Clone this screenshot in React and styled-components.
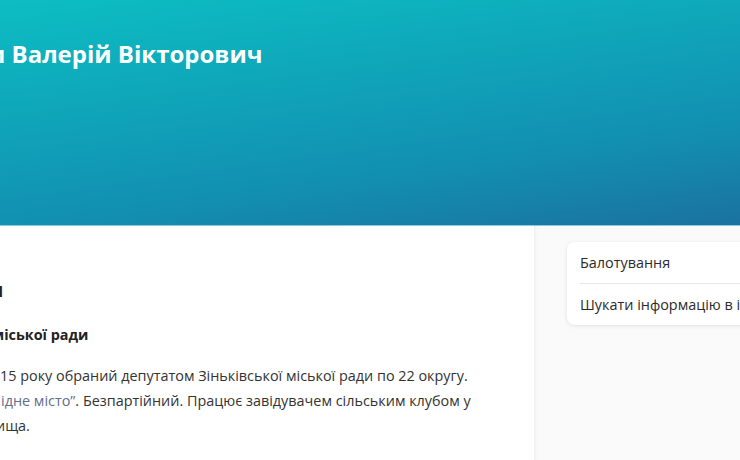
import React from "react";
import styled, { createGlobalStyle } from "styled-components";

const Global = createGlobalStyle`
  html, body { margin: 0; padding: 0; background: #ffffff; }
  body { font-family: "Open Sans", "Noto Sans", sans-serif; overflow: hidden; }
  #root { width: 740px; height: 460px; overflow: hidden; }
`;

const Page = styled.div`
  width: 740px;
  height: 460px;
  display: flex;
  flex-direction: column;
  overflow: hidden;
`;

const Hero = styled.header`
  height: 226px;
  flex: none;
  box-sizing: border-box;
  background: linear-gradient(172deg, #0cbec3 0%, #128fb1 70%, #1b72a0 100%);
  border-bottom: 1px solid #86cbe0;
  overflow: hidden;
  padding-top: 39px;
`;

const Title = styled.h1`
  margin: 0 0 0 ${(p) => p.$shift}px;
  font-size: 24px;
  line-height: 29px;
  font-weight: 700;
  color: #ffffff;
  white-space: nowrap;
`;

const Body = styled.div`
  flex: 1;
  display: flex;
  min-height: 0;
`;

const Main = styled.main`
  width: 534px;
  flex: none;
  overflow: hidden;
  padding-top: 52px;
  box-sizing: border-box;
  color: #333333;
`;

const Heading = styled.h2`
  margin: 0 0 22px ${(p) => p.$shift}px;
  font-size: 20px;
  line-height: 24px;
  font-weight: 700;
  color: #222222;
  white-space: nowrap;
`;

const SubHeading = styled.h3`
  margin: 0 0 18px ${(p) => p.$shift}px;
  font-size: 14.4px;
  line-height: 21px;
  font-weight: 700;
  color: #222222;
  white-space: nowrap;
`;

const Text = styled.p`
  margin: 0;
  font-size: 14.4px;
  line-height: 25px;
  color: #333333;
`;

const Line = styled.span`
  display: block;
  white-space: nowrap;
  margin-left: ${(p) => p.$shift}px;
`;

const Link = styled.a`
  color: #5f6d8e;
  text-decoration: none;
`;

const Aside = styled.aside`
  flex: 1;
  background: #fafafa;
  box-shadow: inset 3px 0 3px -2px rgba(0, 0, 0, 0.06);
  padding: 16px 0 0 33px;
  overflow: hidden;
`;

const Card = styled.nav`
  width: 260px;
  background: #ffffff;
  border-radius: 8px;
  box-shadow: 0 1px 4px rgba(0, 0, 0, 0.1);
  padding: 0 13px;
  display: flex;
  flex-direction: column;
`;

const CardItem = styled.a`
  display: block;
  padding: 10px 0;
  font-size: 14.4px;
  line-height: 21px;
  color: #2b2b2b;
  text-decoration: none;
  white-space: nowrap;
  & + & {
    border-top: 1px solid #e8e8e8;
  }
`;

export default function App() {
  return (
    <>
      <Global />
      <Page>
        <Hero>
          <Title $shift={-12}>и Валерій Вікторович</Title>
        </Hero>
        <Body>
          <Main>
            <Heading $shift={-11}>и</Heading>
            <SubHeading $shift={-8}>міської ради</SubHeading>
            <Text>
              <Line $shift={0}>15 року обраний депутатом Зіньківської міської ради по 22 округу.</Line>
              <Line $shift={1}>
                <Link href="#">ідне місто”</Link>. Безпартійний. Працює завідувачем сільським клубом у
              </Line>
              <Line $shift={-4}>ища.</Line>
            </Text>
          </Main>
          <Aside>
            <Card>
              <CardItem href="#">Балотування</CardItem>
              <CardItem href="#">Шукати інформацію в інтернеті</CardItem>
            </Card>
          </Aside>
        </Body>
      </Page>
    </>
  );
}
